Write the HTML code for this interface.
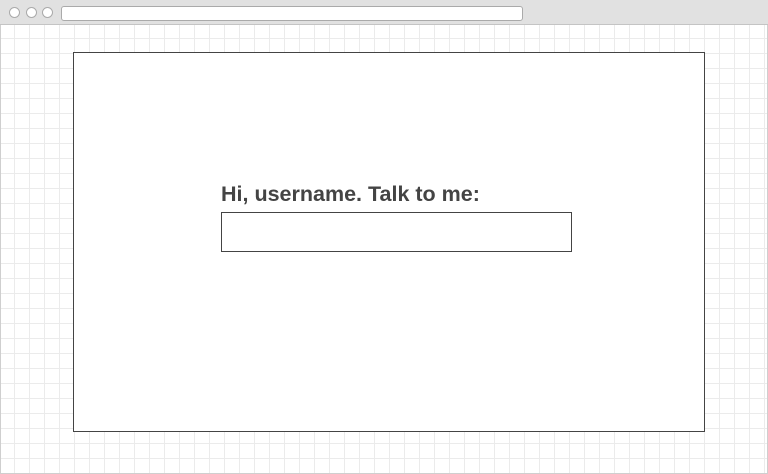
<!DOCTYPE html>
<html><head><style>
html,body{margin:0;padding:0;}
body{width:768px;height:474px;position:relative;overflow:hidden;font-family:"Liberation Sans",Arial,sans-serif;
background-color:#fff;
background-image:linear-gradient(to right,#ebebeb 1px,transparent 1px),linear-gradient(to bottom,#ebebeb 1px,transparent 1px);
background-size:15px 15px;background-position:14px 8px;}
.frame{position:absolute;left:0;top:0;width:766px;height:472px;border:1px solid #cfcfcf;}
.bar{position:absolute;left:0;top:0;width:768px;height:25px;background:#e1e1e1;border-bottom:1px solid #c4c4c4;box-sizing:border-box;}
.dot{position:absolute;top:7px;width:9px;height:9px;border-radius:50%;background:#fff;border:1px solid #aaa;}
.url{position:absolute;left:61px;top:6px;width:460px;height:13px;background:#fff;border:1px solid #aaa;border-radius:3px;}
.box{position:absolute;left:73px;top:52px;width:630px;height:378px;background:#fff;border:1px solid #444;}
.t{position:absolute;left:221px;top:182px;font-size:21.5px;font-weight:bold;color:#444;}
.in{position:absolute;left:221px;top:212px;width:349px;height:38px;border:1px solid #444;background:#fff;}
</style></head><body>
<div class="frame"></div>
<div class="bar"><div class="dot" style="left:9px"></div><div class="dot" style="left:26px"></div><div class="dot" style="left:42px"></div><div class="url"></div></div>
<div class="box"></div>
<div class="t">Hi, username. Talk to me:</div>
<div class="in"></div>
</body></html>
